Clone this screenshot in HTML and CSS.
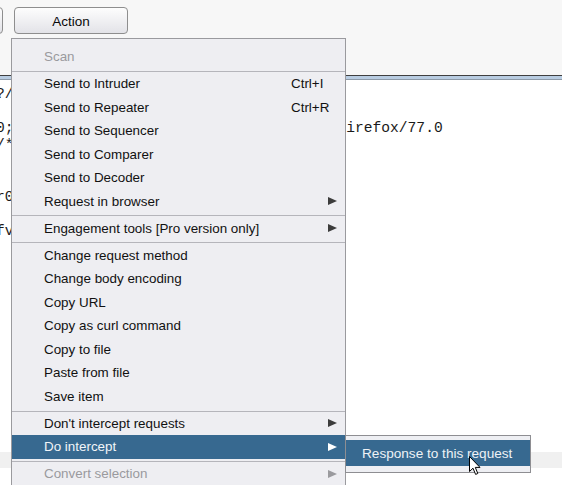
FILE: index.html
```html
<!DOCTYPE html>
<html>
<head>
<meta charset="utf-8">
<link rel="stylesheet" href="styles.css">
</head>
<body>
<div class="topbar">
  <div class="btn btn-prev"></div>
  <div class="btn btn-action">Action</div>
</div>
<div class="divider"></div>
<div class="editor">
<pre class="code"><span class="ln">?/ HTTP/1.1</span>
<span class="ln"></span>
<span class="ln">0; Win64; x64; rv:77.0) Gecko/20100101 Firefox/77.0</span>
<span class="ln">/*;q=0.8</span>
<span class="ln"></span>
<span class="ln"></span>
<span class="ln">r0</span>
<span class="ln"></span>
<span class="ln">fv</span></pre>
</div>
<div class="band"></div>
<div class="footer"></div>

<div class="menu">
  <div class="item disabled"><span class="label">Scan</span></div>
  <div class="sep"></div>
  <div class="item"><span class="label">Send to Intruder</span><span class="key">Ctrl+I</span></div>
  <div class="item"><span class="label">Send to Repeater</span><span class="key">Ctrl+R</span></div>
  <div class="item"><span class="label">Send to Sequencer</span></div>
  <div class="item"><span class="label">Send to Comparer</span></div>
  <div class="item"><span class="label">Send to Decoder</span></div>
  <div class="item"><span class="label">Request in browser</span><span class="key"></span><span class="arrow"></span></div>
  <div class="sep"></div>
  <div class="item"><span class="label">Engagement tools [Pro version only]</span><span class="key"></span><span class="arrow"></span></div>
  <div class="sep"></div>
  <div class="item"><span class="label">Change request method</span></div>
  <div class="item"><span class="label">Change body encoding</span></div>
  <div class="item"><span class="label">Copy URL</span></div>
  <div class="item"><span class="label">Copy as curl command</span></div>
  <div class="item"><span class="label">Copy to file</span></div>
  <div class="item"><span class="label">Paste from file</span></div>
  <div class="item"><span class="label">Save item</span></div>
  <div class="sep"></div>
  <div class="item"><span class="label">Don't intercept requests</span><span class="key"></span><span class="arrow"></span></div>
  <div class="item active"><span class="label">Do intercept</span><span class="key"></span><span class="arrow"></span></div>
  <div class="sep"></div>
  <div class="item disabled"><span class="label">Convert selection</span><span class="key"></span><span class="arrow"></span></div>
</div>

<div class="submenu">
  <div class="subitem">Response to this request</div>
</div>

<svg class="cursor" width="13" height="20" viewBox="0 0 13 20">
  <path d="M0.5 0.5 L0.5 15.5 L4 12.2 L6.6 18.4 L8.8 17.5 L6.3 11.4 L11 11.4 Z" fill="#fff" stroke="#000" stroke-width="1" stroke-linejoin="miter"/>
</svg>
</body>
</html>
```

FILE: styles.css
```css
* { box-sizing: border-box; }
html, body { margin: 0; padding: 0; }
body {
  width: 562px;
  height: 485px;
  overflow: hidden;
  position: relative;
  background: #ffffff;
  font-family: "Liberation Sans", Arial, sans-serif;
}
.topbar {
  height: 75px;
  background: #f7f7f7;
  display: flex;
  align-items: flex-start;
  gap: 11px;
  padding-top: 7px;
}
.btn {
  height: 27px;
  border: 1px solid #8e8e8e;
  border-radius: 4px;
  background: linear-gradient(#fdfdfd, #e3e3e8);
  font-size: 13.5px;
  color: #0a0a0a;
  display: flex;
  align-items: center;
  justify-content: center;
  padding-top: 1px;
  flex-shrink: 0;
}
.btn-prev { width: 60px; margin-left: -57px; }
.btn-action { width: 114px; }
.divider {
  height: 5px;
  border-top: 1px solid #404040;
  border-bottom: 1px solid #8d9aa8;
  background: #b9cde2;
}
.editor {
  height: 372px;
  overflow: hidden;
  background: #fff;
}
.code {
  margin: 0 0 0 -4px;
  padding-top: 5.5px;
  font-family: "Liberation Mono", "Courier New", monospace;
  font-size: 14.6px;
  line-height: 17.2px;
  color: #1a1a1a;
  white-space: pre;
}
.band { height: 16px; background: #f0f0f0; }
.footer { height: 17px; background: #fff; }

.menu {
  position: absolute;
  left: 11px;
  top: 38px;
  width: 335px;
  height: 460px;
  border: 1px solid #9a9a9e;
  background: #eeeef2;
  padding-top: 5.8px;
  font-size: 13.4px;
  color: #111;
}
.item {
  height: 23.55px;
  display: grid;
  grid-template-columns: 247px 35px 19px;
  align-items: center;
  padding-left: 32px;
}
.item.disabled { color: #9a9a9e; }
.item.active { background: #376990; color: #f2f5f8; }
.arrow {
  width: 0;
  height: 0;
  margin-left: 2px;
  border-left: 9px solid #3c3c3c;
  border-top: 4.5px solid transparent;
  border-bottom: 4.5px solid transparent;
}
.item.active .arrow { border-left-color: #ffffff; }
.item.disabled .arrow { border-left-color: #9a9a9e; }
.sep {
  height: 3.4px;
  padding-top: 2px;
  border-bottom: 1px solid #b5b5bb;
}

.submenu {
  position: absolute;
  left: 345px;
  top: 435px;
  width: 186px;
  height: 38px;
  border: 1px solid #8e8e92;
  background: #eeeff3;
  padding-top: 4px;
  font-size: 13.6px;
}
.subitem {
  height: 26px;
  background: #376990;
  color: #eef2f6;
  display: flex;
  align-items: center;
  padding-left: 16px;
}
.cursor {
  position: absolute;
  left: 469px;
  top: 456px;
}
```
